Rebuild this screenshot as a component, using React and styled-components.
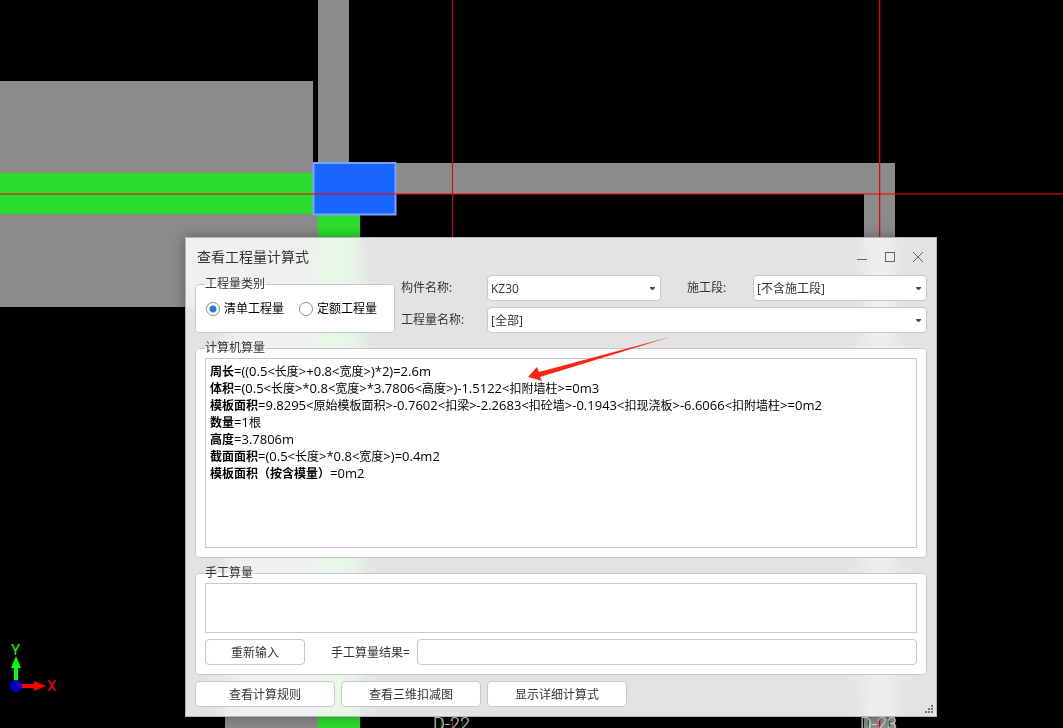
import { useState } from "react";
import { styled, createGlobalStyle } from "styled-components";

const formulas = [
	{ name: "周长", value: "((0.5<长度>+0.8<宽度>)*2)=2.6m" },
	{ name: "体积", value: "(0.5<长度>*0.8<宽度>*3.7806<高度>)-1.5122<扣附墙柱>=0m3" },
	{ name: "模板面积", value: "9.8295<原始模板面积>-0.7602<扣梁>-2.2683<扣砼墙>-0.1943<扣现浇板>-6.6066<扣附墙柱>=0m2" },
	{ name: "数量", value: "1根" },
	{ name: "高度", value: "3.7806m" },
	{ name: "截面面积", value: "(0.5<长度>*0.8<宽度>)=0.4m2" },
	{ name: "模板面积（按含模量）", value: "0m2" },
];

// 平面图
const Drawing = () => (
	<DrawingSvg width="1063" height="728" viewBox="0 0 1063 728" aria-hidden="true">
		<g fill="#8b8b8b">
			<rect x="0" y="81" width="313" height="134" />
			<rect x="0" y="214" width="318" height="93" />
			<rect x="225" y="307" width="93" height="421" />
			<rect x="318" y="0" width="31" height="163" />
			<rect x="396" y="163" width="499" height="31" />
			<rect x="864" y="163" width="31" height="565" />
		</g>
		<rect x="0" y="173" width="313" height="41" fill="#2ddd2d" />
		<rect x="318" y="214" width="42" height="514" fill="#2ddd2d" />
		<rect x="313.5" y="163" width="82" height="51.5" fill="#1966ff" stroke="#7ba2ff" strokeWidth="2" />
		<rect x="0" y="193" width="1063" height="2" fill="#f00" fillOpacity="0.55" />
		<rect x="452" y="0" width="1" height="728" fill="#d40808" />
		<rect x="879" y="0" width="1" height="728" fill="#d40808" />
		<rect x="880" y="0" width="1" height="728" fill="#d40808" fillOpacity="0.3" />

		<g fill="none" stroke="#0a7a14">
			<circle cx="452" cy="724" r="11" />
			<circle cx="879" cy="724" r="11" />
		</g>
		<g fill="#e0e0e0" fontFamily="Roboto, sans-serif" fontWeight="300" fontSize="18">
			<text x="433" y="730">D-22</text>
			<text x="860" y="730">D-23</text>
		</g>

		<rect x="14" y="665" width="4" height="18" fill="#0f0" />
		<path d="M16 656L21 668H11Z" fill="#0f0" />
		<rect x="20" y="684" width="16" height="4" fill="#f00" />
		<path d="M46 686L34 681V691Z" fill="#f00" />
		<circle cx="16" cy="686" r="6" fill="#0000c0" />
		<g fontFamily="Roboto, sans-serif" fontSize="15">
			<text x="11" y="655" fill="#0f0">Y</text>
			<text x="47" y="691" fill="#f00">X</text>
		</g>
	</DrawingSvg>
);

const Dropdown = ({ id, wide, options }) => (
	<SelectWrap $wide={wide}>
		<Select id={id}>
			{options.map((option) => (
				<option key={option}>{option}</option>
			))}
		</Select>
		<Caret width="5" height="3" viewBox="0 0 5 3">
			<path d="M0 0H5V1L3 3H2L0 1Z" fill="#4a4f5c" />
		</Caret>
	</SelectWrap>
);

// 汉字比数字小一号
const Formula = ({ name, value }) => (
	<ResultLine>
		<Han as="b">{name}</Han>=
		{value.split(/([\u4e00-\u9fa5]+)/).map((part, i) => (i % 2 ? <Han key={i}>{part}</Han> : part))}
	</ResultLine>
);

const App = () => {
	const [type, setType] = useState("list");

	return (
		<Stage>
			<GlobalStyle />
			<Drawing />
			<Dialog role="dialog" aria-labelledby="dialog-title">
				<TitleBar>
					<Title id="dialog-title">查看工程量计算式</Title>
					<WindowButton type="button" aria-label="最小化">
						<svg width="12" height="12" viewBox="0 0 12 12"><path d="M1 8.5H11" /></svg>
					</WindowButton>
					<WindowButton type="button" aria-label="最大化">
						<svg width="12" height="12" viewBox="0 0 12 12"><rect x="1.5" y="1.5" width="9" height="9" /></svg>
					</WindowButton>
					<WindowButton type="button" aria-label="关闭">
						<svg width="12" height="12" viewBox="0 0 12 12"><path d="M1 1L11 11M11 1L1 11" /></svg>
					</WindowButton>
				</TitleBar>

				<TopRow>
					<TypeGroup>
						<Legend>工程量类别</Legend>
						<RadioRow>
							<RadioLabel>
								<Radio type="radio" name="type" checked={type === "list"} onChange={() => setType("list")} />
								清单工程量
							</RadioLabel>
							<RadioLabel>
								<Radio type="radio" name="type" checked={type === "quota"} onChange={() => setType("quota")} />
								定额工程量
							</RadioLabel>
						</RadioRow>
					</TypeGroup>
					<FilterGrid>
						<FieldLabel htmlFor="component">构件名称:</FieldLabel>
						<Dropdown id="component" options={["KZ30"]} />
						<FieldLabel htmlFor="section" $indent>施工段:</FieldLabel>
						<Dropdown id="section" options={["[不含施工段]"]} />
						<FieldLabel htmlFor="quantity">工程量名称:</FieldLabel>
						<Dropdown id="quantity" wide options={["[全部]"]} />
					</FilterGrid>
				</TopRow>

				<Group>
					<Legend>计算机算量</Legend>
					<Result>
						{formulas.map((item) => (
							<Formula key={item.name} name={item.name} value={item.value} />
						))}
					</Result>
				</Group>

				<Group>
					<Legend>手工算量</Legend>
					<ManualText aria-label="手工算量" />
					<ManualRow>
						<Button type="button" $width={100}>重新输入</Button>
						<ManualLabel htmlFor="manual-result">手工算量结果=</ManualLabel>
						<ManualInput id="manual-result" type="text" />
					</ManualRow>
				</Group>

				<Footer>
					<Button type="button" $width={140}>查看计算规则</Button>
					<Button type="button" $width={140}>查看三维扣减图</Button>
					<Button type="button" $width={140}>显示详细计算式</Button>
				</Footer>

				<Grip width="8" height="8" viewBox="0 0 8 8" fill="#6f747c">
					<path d="M6 0h2v2h-2zM3 3h2v2h-2zM6 3h2v2h-2zM0 6h2v2h-2zM3 6h2v2h-2zM6 6h2v2h-2z" />
				</Grip>
			</Dialog>
			<Pointer width="144" height="46" viewBox="0 0 144 46" aria-hidden="true">
				<path d="M0 41L9 31L11 36L142 1L12 41L14 45Z" fill="#ff2514" />
			</Pointer>
		</Stage>
	);
};

export default App;

// css
const GlobalStyle = createGlobalStyle`
	* {
		box-sizing: border-box;
	}

	body {
		margin: 0;
		background: #000;
	}

	body, button, input, select, textarea {
		font-family: "Open Sans", "Noto Sans CJK SC", sans-serif;
		font-size: 12px;
		color: #333;
	}
`;

const Stage = styled.main`
	position: relative;
	min-height: 100vh;
	overflow: hidden;
	background: #000;
`;

const DrawingSvg = styled.svg`
	position: absolute;
	top: 0;
	left: 0;
`;

const Dialog = styled.section`
	position: absolute;
	top: 237px;
	left: 185px;
	right: 126px;
	padding: 0 9px 9px;
	border: 1px solid #b4b4b4;
	background: rgba(251, 251, 251, 0.907);
	backdrop-filter: blur(10px);
	box-shadow: 0 0 12px rgba(0, 0, 0, 0.35);
`;

const TitleBar = styled.header`
	display: flex;
	align-items: center;
	height: 37px;
	margin: 0 -5px 0 2px;
`;

const Title = styled.h1`
	flex: 1;
	margin: 0;
	font-size: 14px;
	font-weight: 400;
	line-height: 20px;
`;

const WindowButton = styled.button`
	display: flex;
	align-items: center;
	justify-content: center;
	width: 28px;
	height: 28px;
	padding: 0;
	border: none;
	background: none;

	svg {
		fill: none;
		stroke: #666;
	}
`;

const TopRow = styled.div`
	display: flex;
	align-items: flex-end;
	gap: 6px;
`;

const Group = styled.fieldset`
	min-width: 0;
	margin: 7px 0 0;
	padding: 2px 9px 9px;
	border: 1px solid #c8c8c8;
	border-radius: 4px;
	background: #fff;
`;

const TypeGroup = styled(Group)`
	flex: none;
	width: 200px;
	margin: 0;
	padding: 8px 10px 15px;

	legend {
		margin-left: -1px;
	}
`;

const Legend = styled.legend`
	padding: 0;
	line-height: 16px;
`;

const RadioRow = styled.div`
	display: flex;
	gap: 15px;
`;

const RadioLabel = styled.label`
	display: flex;
	align-items: center;
	gap: 4px;
	line-height: 17px;
	white-space: nowrap;
	color: #000;
`;

const Radio = styled.input`
	appearance: none;
	width: 14px;
	height: 14px;
	margin: 0;
	border: 1px solid #8c8c8c;
	border-radius: 50%;
	background: #fff;

	&:checked {
		background: radial-gradient(circle, #1f7ae8 3px, #fff 4px);
	}
`;

const FilterGrid = styled.div`
	flex: 1;
	display: grid;
	grid-template-columns: 86px 1fr 92px 1fr;
	row-gap: 6px;
	align-items: center;
`;

const FieldLabel = styled.label`
	padding-left: ${(props) => (props.$indent ? 26 : 0)}px;
	line-height: 18px;
`;

const SelectWrap = styled.div`
	position: relative;
	grid-column: ${(props) => (props.$wide ? "span 3" : "auto")};
`;

const Select = styled.select`
	display: block;
	appearance: none;
	width: 100%;
	height: 26px;
	padding: 0 16px 0 3px;
	border: 1px solid #c8c8c8;
	border-radius: 4px;
	background: #fff;
`;

const Caret = styled.svg`
	position: absolute;
	top: 12px;
	right: 6px;
	pointer-events: none;
`;

const Result = styled.div`
	min-height: 190px;
	padding: 4px;
	border: 1px solid #c8c8c8;
	color: #000;
`;

const ResultLine = styled.p`
	margin: 0;
	font-size: 13px;
	line-height: 17px;
`;

const Han = styled.span`
	font-size: 12px;
	line-height: 1;
`;

const ManualText = styled.textarea`
	display: block;
	width: 100%;
	height: 50px;
	padding: 4px;
	border: 1px solid #c8c8c8;
	background: #fff;
	resize: none;
`;

const ManualRow = styled.div`
	display: flex;
	align-items: center;
	margin-top: 6px;
`;

const ManualLabel = styled.label`
	flex: none;
	width: 86px;
	margin-left: 26px;
`;

const ManualInput = styled.input`
	flex: 1;
	min-width: 0;
	height: 26px;
	padding: 0 4px;
	border: 1px solid #c8c8c8;
	border-radius: 4px;
	background: #fff;
`;

const Button = styled.button`
	width: ${(props) => props.$width}px;
	height: 26px;
	padding: 0;
	border: 1px solid #c8c8c8;
	border-radius: 4px;
	background: #fff;
`;

const Footer = styled.footer`
	display: flex;
	gap: 6px;
	margin-top: 6px;
`;

const Grip = styled.svg`
	position: absolute;
	right: 3px;
	bottom: 3px;
`;

const Pointer = styled.svg`
	position: absolute;
	top: 336px;
	left: 528px;
	pointer-events: none;
`;
